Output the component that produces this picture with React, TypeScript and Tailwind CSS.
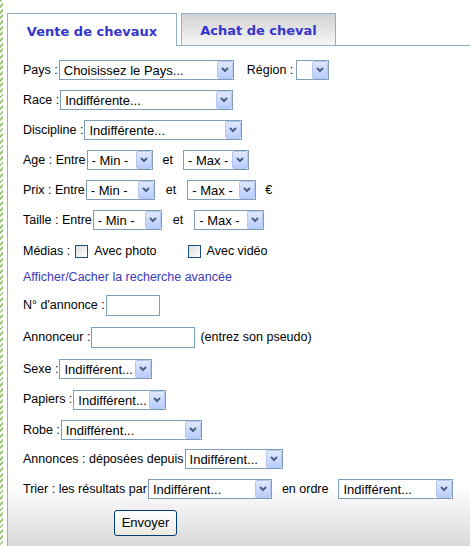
import React from 'react'

const font = "font-['Liberation_Sans',Arial,sans-serif]"

function Arrow() {
  return (
    <span className="pointer-events-none absolute right-[1px] top-[1px] bottom-[1px] w-[16px] rounded-[2px] border border-[#b5c8f3] bg-[linear-gradient(to_bottom,#dfe8fe,#b9cdfb)] flex items-center justify-center">
      <svg width="8" height="6" viewBox="0 0 8 6">
        <path d="M1 1 L4 4 L7 1" fill="none" stroke="#4d6185" strokeWidth="2" />
      </svg>
    </span>
  )
}

function Sel({ w, value = '' }: { w: string; value?: string }) {
  return (
    <div className={`relative h-[20px] ${w} shrink-0`}>
      <select
        className={`appearance-none h-full w-full border border-[#7f9db9] bg-white pl-[4px] pr-[18px] text-[13px] text-black outline-none ${font}`}
        defaultValue={value}
      >
        <option value={value}>{value}</option>
      </select>
      <Arrow />
    </div>
  )
}

function Check({ label }: { label: string }) {
  return (
    <label className="flex items-center gap-[6px]">
      <span className="w-[13px] h-[13px] border border-[#1c5180] bg-[linear-gradient(135deg,#dcdcd7,#fff)]" />
      <span>{label}</span>
    </label>
  )
}

export default function App() {
  return (
    <div className={`w-[470px] h-[546px] flex bg-white overflow-hidden text-[12.5px] text-black ${font}`}>
      {/* bordure verte */}
      <div className="w-[3px] h-full bg-[repeating-linear-gradient(135deg,#9fcb7c_0px,#9fcb7c_2px,#ffffff_2px,#ffffff_4px)]" />
      <div className="w-[4px]" />

      <div className="flex-1 flex flex-col min-w-0">
        {/* Onglets */}
        <div className="flex mt-[13px] h-[33px]">
          <div className="w-[170px] border-t border-l border-r border-[#8eb3c8] bg-white flex items-center justify-center pt-[4px] font-['DejaVu_Sans',Verdana,sans-serif] font-bold text-[13px] text-[#3535cc]">
            Vente de chevaux
          </div>
          <div className="w-[4px] border-b border-[#8eb3c8]" />
          <div className="w-[155px] border border-[#8eb3c8] bg-[linear-gradient(to_bottom,#d2d2d2,#f6f6f6)] flex items-center justify-center pt-[3px] font-['DejaVu_Sans',Verdana,sans-serif] font-bold text-[13px] text-[#3535cc]">
            Achat de cheval
          </div>
          <div className="flex-1 border-b border-[#8eb3c8]" />
        </div>

        {/* Formulaire */}
        <div className="flex-1 border-l border-[#8eb3c8] pl-[15px] pt-[9px] bg-[linear-gradient(to_bottom,#ffffff_88%,#d9d9d9_100%)]">
          <div className="h-[30px] flex items-center">
            <span className="mr-[1px]">Pays :</span>
            <Sel w="w-[175px]" value="Choisissez le Pays..." />
            <span className="ml-[13px] mr-[3px]">Région :</span>
            <Sel w="w-[33px]" />
          </div>
          <div className="h-[30px] flex items-center">
            <span className="mr-[1px]">Race :</span>
            <Sel w="w-[173px]" value="Indifférente..." />
          </div>
          <div className="h-[30px] flex items-center">
            <span className="mr-[1px]">Discipline :</span>
            <Sel w="w-[158px]" value="Indifférente..." />
          </div>
          <div className="h-[30px] flex items-center">
            <span className="mr-[1px]">Age : Entre</span>
            <Sel w="w-[66px]" value="- Min -" />
            <span className="mx-[10px]">et</span>
            <Sel w="w-[66px]" value="- Max -" />
          </div>
          <div className="h-[30px] flex items-center">
            <span className="mr-[1px]">Prix : Entre</span>
            <Sel w="w-[69px]" value="- Min -" />
            <span className="mx-[11px]">et</span>
            <Sel w="w-[69px]" value="- Max -" />
            <span className="ml-[9px]">€</span>
          </div>
          <div className="h-[30px] flex items-center">
            <span className="mr-[1px]">Taille : Entre</span>
            <Sel w="w-[69px]" value="- Min -" />
            <span className="mx-[11px]">et</span>
            <Sel w="w-[70px]" value="- Max -" />
          </div>
          <div className="h-[30px] mt-[1px] flex items-center">
            <span className="mr-[5px]">Médias :</span>
            <Check label="Avec photo" />
            <span className="w-[31px]" />
            <Check label="Avec vidéo" />
          </div>
          <div className="h-[22px] flex items-center">
            <a href="#" className="text-[#3a3ab8]">Afficher/Cacher la recherche avancée</a>
          </div>
          <div className="h-[34px] flex items-center">
            <span className="mr-[1px]">N° d'annonce :</span>
            <input className="h-[21px] w-[54px] border border-[#7f9db9] outline-none" />
          </div>
          <div className="h-[31px] flex items-center">
            <span className="mr-[1px]">Annonceur :</span>
            <input className="h-[21px] w-[104px] border border-[#7f9db9] outline-none" />
            <span className="ml-[5px]">(entrez son pseudo)</span>
          </div>
          <div className="h-[32px] flex items-center">
            <span className="mr-[1px]">Sexe :</span>
            <Sel w="w-[93px]" value="Indifférent..." />
          </div>
          <div className="h-[29px] flex items-center">
            <span className="mr-[1px]">Papiers :</span>
            <Sel w="w-[93px]" value="Indifférent..." />
          </div>
          <div className="h-[32px] flex items-center">
            <span className="mr-[1px]">Robe :</span>
            <Sel w="w-[141px]" value="Indifférent..." />
          </div>
          <div className="h-[26px] flex items-center">
            <span className="mr-[1px]">Annonces : déposées depuis</span>
            <Sel w="w-[98px]" value="Indifférent..." />
          </div>
          <div className="h-[34px] flex items-center">
            <span className="mr-[1px]">Trier : les résultats par</span>
            <Sel w="w-[124px]" value="Indifférent..." />
            <span className="mx-[10px]">en ordre</span>
            <Sel w="w-[115px]" value="Indifférent..." />
          </div>
          <div className="mt-[4px] pl-[91px]">
            <button className="h-[26px] w-[63px] rounded-[3px] border border-[#003c74] bg-[linear-gradient(to_bottom,#ffffff,#ece9e0)] text-[13px] text-black">
              Envoyer
            </button>
          </div>
        </div>
      </div>
    </div>
  )
}
